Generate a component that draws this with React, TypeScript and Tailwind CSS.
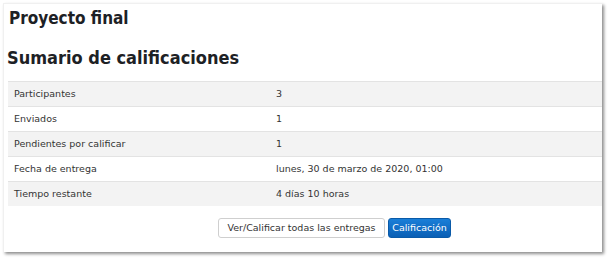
const rows = [
  { label: "Participantes", value: "3" },
  { label: "Enviados", value: "1" },
  { label: "Pendientes por calificar", value: "1" },
  { label: "Fecha de entrega", value: "lunes, 30 de marzo de 2020, 01:00" },
  { label: "Tiempo restante", value: "4 días 10 horas" },
];

export default function App() {
  return (
    <div className="w-[610px] h-[262px] bg-white pt-[3px] pl-[3px] font-['DejaVu_Sans',Verdana,sans-serif]">
      <div className="w-[599px] h-[249px] bg-white border-t border-l border-[#f0f0f0] shadow-[2px_2px_3px_rgba(0,0,0,0.45)] flex flex-col">
        <h2 className="pl-[5px] pt-[3px] text-[17px] leading-[22px] font-bold text-[#1d2125] font-['DejaVu_Sans_Condensed','DejaVu_Sans',sans-serif]">
          Proyecto final
        </h2>
        <h3 className="pl-[3px] mt-[18px] text-[18px] leading-[22px] font-bold text-[#1d2125] font-['DejaVu_Sans_Condensed','DejaVu_Sans',sans-serif]">
          Sumario de calificaciones
        </h3>
        <div className="ml-[4px] mt-[12px] flex flex-col">
          {rows.map((r, i) => (
            <div
              key={r.label}
              className={`flex items-center h-[25px] border-t border-[#e3e3e3] text-[9.5px] text-[#333] ${
                i % 2 === 0 ? "bg-[#f3f3f3]" : "bg-white"
              }`}
            >
              <div className="w-[268px] pl-[6px]">{r.label}</div>
              <div>{r.value}</div>
            </div>
          ))}
        </div>
        <div className="flex gap-[3px] mt-[12px] pl-[214px]">
          <button className="w-[167px] h-[20px] bg-white border border-[#cfcfcf] rounded-[3px] text-[9.5px] text-[#333]">
            Ver/Calificar todas las entregas
          </button>
          <button className="w-[63px] h-[20px] rounded-[3px] border border-[#0a5aa8] bg-gradient-to-b from-[#1a7fd8] to-[#0a5fb5] text-[9.5px] text-white">
            Calificación
          </button>
        </div>
      </div>
    </div>
  );
}
